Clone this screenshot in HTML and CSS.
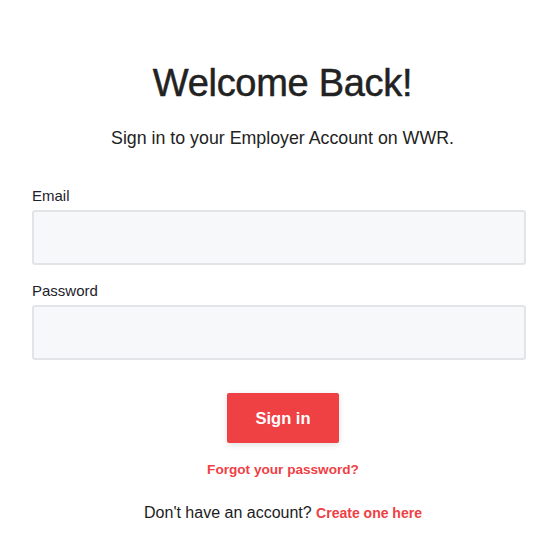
FILE: index.html
```html
<!DOCTYPE html>
<html lang="en">
<head>
<meta charset="utf-8">
<title>Sign in</title>
<link rel="stylesheet" href="styles.css">
</head>
<body>
<main class="page">
  <header class="intro">
    <h1 class="title">Welcome Back!</h1>
    <p class="subtitle">Sign in to your Employer Account on WWR.</p>
  </header>
  <form class="form">
    <label class="label" for="email">Email</label>
    <input class="input" id="email" type="email">
    <label class="label" for="password">Password</label>
    <input class="input" id="password" type="password">
    <div class="actions">
      <button class="btn" type="button">Sign in</button>
      <a class="link forgot" href="#">Forgot your password?</a>
      <p class="signup">Don't have an account? <a class="link" href="#">Create one here</a></p>
    </div>
  </form>
</main>
</body>
</html>
```

FILE: styles.css
```css
* { box-sizing: border-box; }
html, body { margin: 0; padding: 0; background: #fff; }
body { font-family: "Liberation Sans", Arial, sans-serif; color: #1c1c1c; }
.page { padding: 60px 25px 0 32px; display: flex; flex-direction: column; }
.intro { display: flex; flex-direction: column; align-items: center; padding-left: 7px; }
.title { margin: 0; font-size: 38px; font-weight: 400; line-height: 46px; color: #222; letter-spacing: -0.3px; -webkit-text-stroke: 0.5px #222; }
.subtitle { margin: 20px 0 0; font-size: 17.8px; line-height: 24px; color: #222; }
.form { width: 100%; margin-top: 37px; display: flex; flex-direction: column; }
.label { font-size: 15px; line-height: 18px; color: #1d1d2b; margin-bottom: 5px; }
.input { display: block; width: 100%; height: 55px; border: 2px solid #e3e4e7; border-radius: 3px; background: #f7f8fa; margin: 0 0 17px; font: inherit; }
.input:last-of-type { margin-bottom: 0; }
.actions { display: flex; flex-direction: column; align-items: center; padding-left: 8px; margin-top: 33px; }
.btn { width: 112px; height: 50px; border: 0; border-radius: 2px; background: #ef4044; color: #fff; font-family: "Liberation Sans", Arial, sans-serif; font-weight: 700; font-size: 16.5px; box-shadow: 0 2px 6px rgba(0,0,0,0.12); cursor: pointer; }
.link { color: #ef4044; font-weight: 700; text-decoration: none; }
.forgot { margin-top: 18px; font-size: 13.6px; line-height: 18px; }
.signup { margin: 24px 0 0; font-size: 16px; line-height: 20px; color: #1c1c1c; }
.signup .link { font-size: 14px; }
```
